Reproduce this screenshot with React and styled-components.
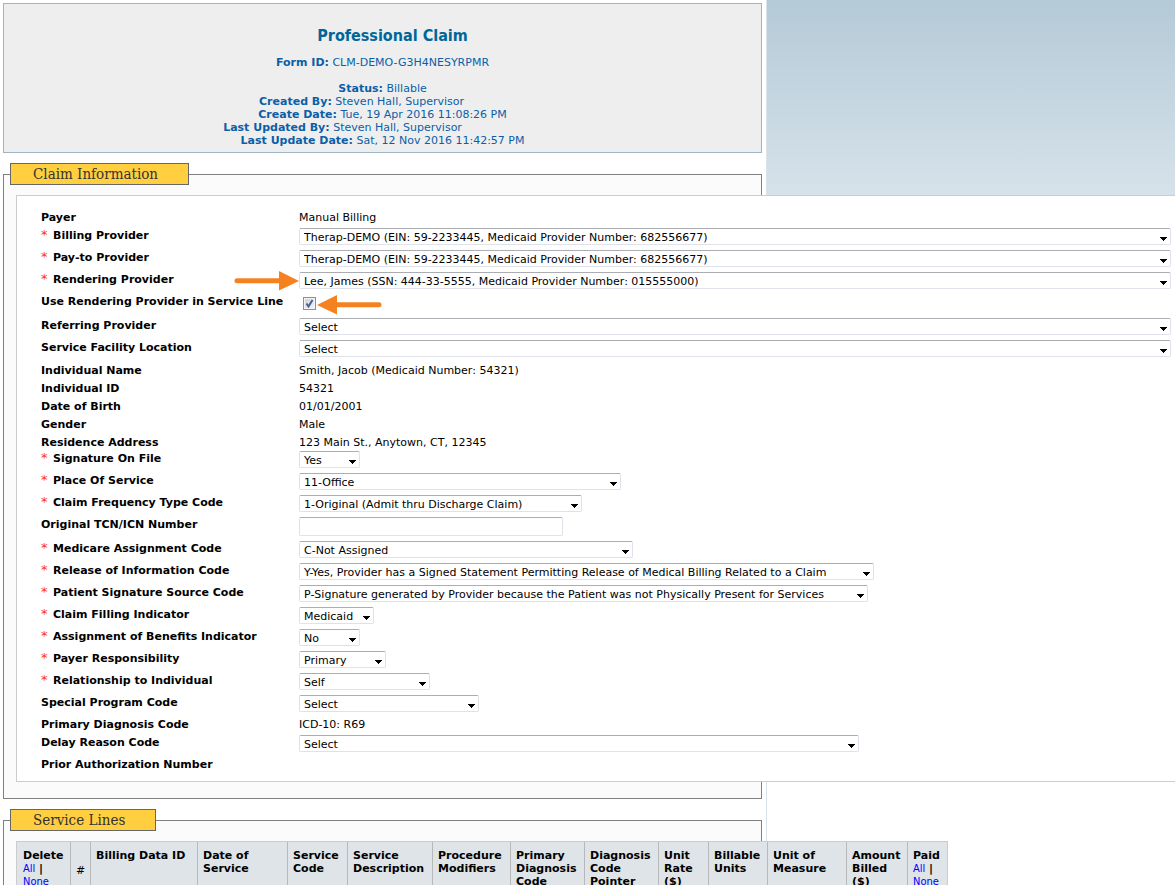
import React from "react";
import styled, { createGlobalStyle } from "styled-components";

const GlobalStyle = createGlobalStyle`
  * { box-sizing: border-box; }
  body {
    margin: 0;
    font-family: Verdana, "DejaVu Sans", sans-serif;
    font-size: 11px;
    line-height: 13px;
    color: #000;
  }
`;

const Page = styled.div`
  display: flex;
  height: 100vh;
  overflow: hidden;
  background: linear-gradient(#b4cad7, #d6e2ea 195px, #fff 450px);
`;

const Main = styled.main`
  flex: 0 0 65.28%;
  min-width: 0;
  padding: 3px 4px 0 3px;
  background: #fff;
  border-right: 1px solid #dbe2e9;
`;

const FormHeader = styled.header`
  padding: 21px 0 5px;
  margin-bottom: 10px;
  border: 1px solid #9fb4c5;
  background: #eee;
  color: #0b5ea8;
  text-align: center;
`;

const Title = styled.h1`
  margin: 0 0 9px;
  padding-left: 20px;
  font-family: Tahoma, "DejaVu Sans Condensed", sans-serif;
  font-size: 16px;
  line-height: 22px;
  color: #069;
`;

const HeaderLine = styled.p`
  margin: 0;
  padding-right: ${(p) => p.$trail || 0}px;
  margin-bottom: ${(p) => (p.$spaced ? 13 : 0)}px;
`;

const Section = styled.fieldset`
  min-width: 0;
  margin: 0 0 10px;
  padding: 10px 0 16px 12px;
  border: 1px solid #808080;
  background: #fbfbfb;
`;

const Legend = styled.legend`
  margin-left: -6px;
  padding: 0 30px 0 22px;
  border: 1px solid #666;
  background: #ffcf40;
  color: #333;
  font-family: "DejaVu Serif Condensed", "DejaVu Serif", serif;
  font-size: 15px;
  line-height: 20px;
`;

const Panel = styled.div`
  width: calc(100vw - 16px);
  padding: 12px 4px 4px 24px;
  border: 1px solid #ccc;
  border-right: 0;
  background: #fff;
`;

const Row = styled.div`
  display: grid;
  grid-template-columns: 258px 1fr;
  height: ${(p) => p.$height}px;
  line-height: 20px;
`;

const Label = styled.label`
  position: relative;
  font-weight: bold;
  white-space: nowrap;
`;

const Required = styled.span`
  display: inline-block;
  width: 12px;
  color: #f30;
  font-size: 13px;
  line-height: 13px;
  font-weight: normal;
`;

const Value = styled.div`
  position: relative;
  padding-top: ${(p) => (p.$control ? 2 : 0)}px;
  white-space: nowrap;
`;

const SelectBox = styled.div`
  position: relative;
  width: ${(p) => (p.$width ? `${p.$width}px` : "100%")};
  height: 17px;

  svg {
    position: absolute;
    right: 4px;
    top: 9px;
    pointer-events: none;
  }
`;

const fieldLook = `
  display: block;
  margin: 0;
  border: 1px solid #dfe2ea;
  border-top-color: #abadb3;
  border-radius: 2px;
  background: #fff;
  color: #000;
  font: inherit;
  font-size: 11px;
`;

const Select = styled.select`
  ${fieldLook}
  appearance: none;
  width: 100%;
  height: 17px;
  padding: 1px 4px 0;
  line-height: 15px;
`;

const TextInput = styled.input`
  ${fieldLook}
  width: 264px;
  height: 19px;
  padding: 0 4px;
`;

const CheckWrap = styled.div`
  position: relative;
  width: 13px;
  height: 13px;
  margin: 3px 0 0 4px;

  input {
    appearance: none;
    display: block;
    width: 13px;
    height: 13px;
    margin: 0;
    border: 1px solid #8e8f8f;
    box-shadow: inset 0 0 0 1px #f4f4f4;
    background: linear-gradient(135deg, #cbcfd5, #f6f6f6);
  }

  svg {
    position: absolute;
    left: 0;
    top: 0;
    pointer-events: none;
  }
`;

const Pointer = styled.svg`
  position: absolute;
  top: ${(p) => p.$top}px;
  left: ${(p) => p.$left}px;
`;

const LinesTable = styled.table`
  width: 932px;
  table-layout: fixed;
  border-collapse: collapse;
  outline: 1px solid #ccc;
  outline-offset: -1px;
  background: #dee4e7;
`;

const HeadCell = styled.th`
  height: 56px;
  padding: 7px 0 5px 5px;
  border: 1px solid #b8b8b8;
  font-weight: ${(p) => (p.$plain ? "normal" : "bold")};
  text-align: left;
  vertical-align: ${(p) => (p.$plain ? "middle" : "top")};

  &:first-child {
    padding-left: 6px;
  }
`;

const PickLink = styled.a`
  color: #00f;
  font-family: "DejaVu Sans Condensed", Verdana, sans-serif;
  font-weight: normal;
  text-decoration: none;
`;

const FIELDS = [
  { label: "Payer", text: "Manual Billing" },
  { label: "Billing Provider", required: true, select: "Therap-DEMO (EIN: 59-2233445, Medicaid Provider Number: 682556677)" },
  { label: "Pay-to Provider", required: true, select: "Therap-DEMO (EIN: 59-2233445, Medicaid Provider Number: 682556677)" },
  { label: "Rendering Provider", required: true, select: "Lee, James (SSN: 444-33-5555, Medicaid Provider Number: 015555000)", pointer: "right" },
  { label: "Use Rendering Provider in Service Line", check: true, height: 24, pointer: "left" },
  { label: "Referring Provider", select: "Select" },
  { label: "Service Facility Location", select: "Select", height: 23 },
  { label: "Individual Name", text: "Smith, Jacob (Medicaid Number: 54321)" },
  { label: "Individual ID", text: "54321" },
  { label: "Date of Birth", text: "01/01/2001" },
  { label: "Gender", text: "Male" },
  { label: "Residence Address", text: "123 Main St., Anytown, CT, 12345", height: 16 },
  { label: "Signature On File", required: true, select: "Yes", width: 61 },
  { label: "Place Of Service", required: true, select: "11-Office", width: 322 },
  { label: "Claim Frequency Type Code", required: true, select: "1-Original (Admit thru Discharge Claim)", width: 283 },
  { label: "Original TCN/ICN Number", input: true, height: 24 },
  { label: "Medicare Assignment Code", required: true, select: "C-Not Assigned", width: 334 },
  { label: "Release of Information Code", required: true, select: "Y-Yes, Provider has a Signed Statement Permitting Release of Medical Billing Related to a Claim", width: 575 },
  { label: "Patient Signature Source Code", required: true, select: "P-Signature generated by Provider because the Patient was not Physically Present for Services", width: 569 },
  { label: "Claim Filling Indicator", required: true, select: "Medicaid", width: 75 },
  { label: "Assignment of Benefits Indicator", required: true, select: "No", width: 61 },
  { label: "Payer Responsibility", required: true, select: "Primary", width: 87 },
  { label: "Relationship to Individual", required: true, select: "Self", width: 131 },
  { label: "Special Program Code", select: "Select", width: 180 },
  { label: "Primary Diagnosis Code", text: "ICD-10: R69" },
  { label: "Delay Reason Code", select: "Select", width: 560 },
  { label: "Prior Authorization Number", height: 22 },
];

const COLUMNS = [
  { name: "Delete", width: 54, pick: true },
  { name: "#", width: 20, plain: true },
  { name: "Billing Data ID", width: 107 },
  { name: "Date of Service", width: 90, lines: ["Date of", "Service"] },
  { name: "Service Code", width: 60, lines: ["Service", "Code"] },
  { name: "Service Description", width: 85, lines: ["Service", "Description"] },
  { name: "Procedure Modifiers", width: 78, lines: ["Procedure", "Modifiers"] },
  { name: "Primary Diagnosis Code", width: 74, lines: ["Primary", "Diagnosis", "Code"] },
  { name: "Diagnosis Code Pointer", width: 74, lines: ["Diagnosis", "Code", "Pointer"] },
  { name: "Unit Rate", width: 50, lines: ["Unit", "Rate", "($)"] },
  { name: "Billable Units", width: 59, lines: ["Billable", "Units"] },
  { name: "Unit of Measure", width: 79, lines: ["Unit of", "Measure"] },
  { name: "Amount Billed", width: 61, lines: ["Amount", "Billed", "($)"] },
  { name: "Paid", width: 40, pick: true },
];

function OrangeArrow({ direction }) {
  const right = direction === "right";
  return (
    <Pointer
      $top={right ? 1 : 3}
      $left={right ? 193 : 18}
      width="65"
      height="20"
      viewBox="0 0 65 20"
      aria-hidden="true"
    >
      <g transform={right ? undefined : "matrix(-1 0 0 1 65 0)"} fill="#f58220">
        <path d="M45 0 65 10 45 19.500Z" />
        <path d="M3 9.800H47" stroke="#f58220" strokeWidth="5" strokeLinecap="round" />
      </g>
    </Pointer>
  );
}

function Control({ field, id }) {
  if (field.select) {
    return (
      <SelectBox $width={field.width}>
        <Select id={id} defaultValue={field.select}>
          <option>{field.select}</option>
        </Select>
        <svg width="7" height="4" viewBox="0 0 7 4" shapeRendering="crispEdges" aria-hidden="true">
          <path d="M0 0h7v1H0zM1 1h5v1H1zM2 2h3v1H2zM3 3h1v1H3z" />
        </svg>
      </SelectBox>
    );
  }
  if (field.input) return <TextInput id={id} type="text" />;
  if (field.check) {
    return (
      <CheckWrap>
        <input id={id} type="checkbox" defaultChecked />
        <svg width="13" height="13" viewBox="0 0 13 13" aria-hidden="true">
          <path d="M3.500 6.500 5.500 9.500 9.500 3" fill="none" stroke="#4a5f97" strokeWidth="2" />
        </svg>
      </CheckWrap>
    );
  }
  return field.text || null;
}

function Field({ field }) {
  const id = field.label.toLowerCase().replace(/[^a-z]+/g, "-");
  const isControl = Boolean(field.select || field.input || field.check);
  return (
    <Row $height={field.height || (field.select ? 22 : 18)}>
      <Label as={isControl ? undefined : "span"} htmlFor={isControl ? id : undefined}>
        {field.required && <Required>*</Required>}
        {field.label}
        {field.pointer === "right" && <OrangeArrow direction="right" />}
      </Label>
      <Value $control={isControl}>
        <Control field={field} id={id} />
        {field.pointer === "left" && <OrangeArrow direction="left" />}
      </Value>
    </Row>
  );
}

function ColumnHead({ column }) {
  const lines = column.lines || [column.name];
  return (
    <HeadCell scope="col" $plain={column.plain}>
      {lines.map((line) => (
        <div key={line}>{line}</div>
      ))}
      {column.pick && (
        <>
          <div>
            <PickLink href="#all">All</PickLink> |
          </div>
          <PickLink href="#none">None</PickLink>
        </>
      )}
    </HeadCell>
  );
}

export default function App() {
  return (
    <>
      <GlobalStyle />
      <Page>
        <Main>
          <FormHeader>
            <Title>Professional Claim</Title>
            <HeaderLine $spaced>
              <b>Form ID:</b> CLM-DEMO-G3H4NESYRPMR
            </HeaderLine>
            <HeaderLine><b>Status:</b> Billable</HeaderLine>
            <HeaderLine $trail={42}><b>Created By:</b> Steven Hall, Supervisor</HeaderLine>
            <HeaderLine><b>Create Date:</b> Tue, 19 Apr 2016 11:08:26 PM</HeaderLine>
            <HeaderLine $trail={80}><b>Last Updated By:</b> Steven Hall, Supervisor</HeaderLine>
            <HeaderLine><b>Last Update Date:</b> Sat, 12 Nov 2016 11:42:57 PM</HeaderLine>
          </FormHeader>

          <Section>
            <Legend>Claim Information</Legend>
            <Panel>
              {FIELDS.map((field) => (
                <Field key={field.label} field={field} />
              ))}
            </Panel>
          </Section>

          <Section>
            <Legend>Service Lines</Legend>
            <LinesTable>
              <colgroup>
                {COLUMNS.map((column) => (
                  <col key={column.name} width={column.width} />
                ))}
              </colgroup>
              <thead>
                <tr>
                  {COLUMNS.map((column) => (
                    <ColumnHead key={column.name} column={column} />
                  ))}
                </tr>
              </thead>
            </LinesTable>
          </Section>
        </Main>
      </Page>
    </>
  );
}
